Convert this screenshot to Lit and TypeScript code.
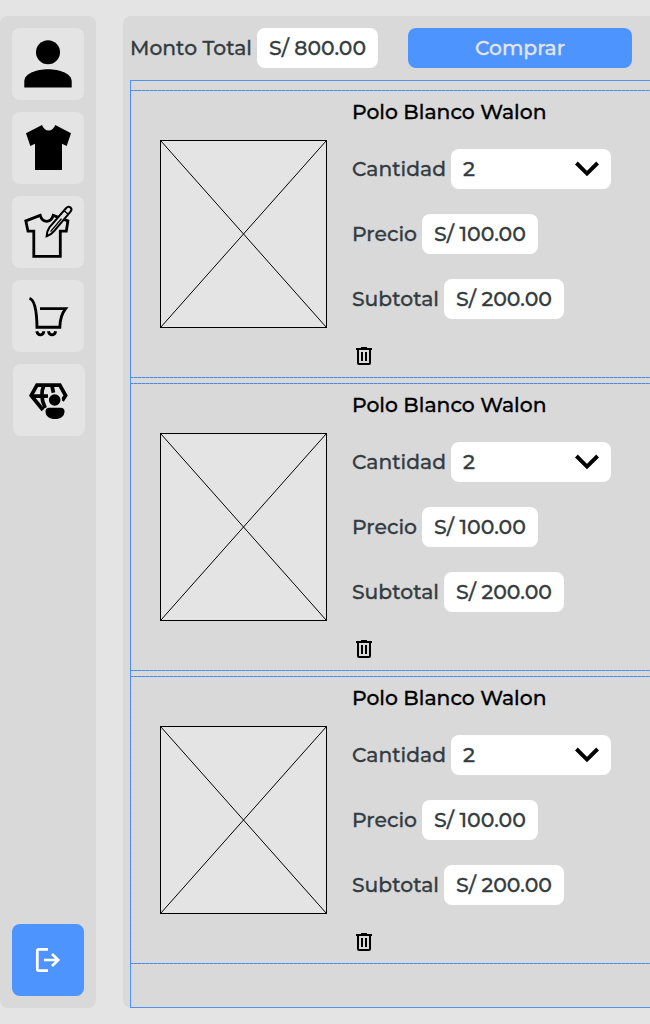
import { LitElement, html, css, svg } from "lit";
import { customElement, property } from "lit/decorators.js";

interface CartItem {
  name: string;
  quantity: number;
  price: string;
  subtotal: string;
}

const ITEMS: CartItem[] = Array.from({ length: 3 }, () => ({
  name: "Polo Blanco Walon",
  quantity: 2,
  price: "S/ 100.00",
  subtotal: "S/ 200.00",
}));

// A line of text set to a fixed advance width, on a 24px high line.
@customElement("fit-text")
export class FitText extends LitElement {
  @property() text = "";
  @property({ type: Number }) width = 0;

  static styles = css`
    :host { display: block; height: 24px; flex: none; }
    .line { display: block; overflow: visible; }
    .glyphs {
      font-family: Montserrat, Inter, "Open Sans", sans-serif;
      font-size: 20px;
      font-weight: inherit;
      fill: currentColor;
      stroke: currentColor;
      stroke-width: 0.28px;
    }
  `;

  render() {
    return html`<svg class="line" width=${this.width} height="24">
      <text class="glyphs" x="0" y="19" textLength=${this.width} lengthAdjust="spacingAndGlyphs">${this.text}</text>
    </svg>`;
  }
}

const icons = {
  user: svg`<circle cx="36" cy="24.2" r="12"/><path d="M12.3 59.5V53.5C12.3 45.5 24.5 41.3 36 41.3S59.7 45.5 59.7 53.5V59.5Z"/>`,
  shirt: svg`<path d="M30 13L14 21.3 18.3 34 23 31.7V58H50V31.7L54.7 34 59 21.3 43.3 13C42 16.5 39.5 18.6 36.6 18.6S31.2 16.5 30 13Z"/>`,
  design: svg`
    <path d="M28.2 19.4L13.8 24.9 16 35.2H21.8V60.3H48.3V35.2H54.3L55.9 25 41.2 19.4C40 23.5 37.6 25.3 34.7 25.3S29.4 23.5 28.2 19.4Z" fill="none" stroke="#000" stroke-width="2.8"/>
    <path d="M34.6 40.3C34.9 36.8 35.7 33.8 37.4 31.4L54.2 12C55.5 10.6 57.4 10.6 58.5 11.5 59.7 12.6 59.7 14.2 58.5 15.6L42.3 34.9C40.2 37.5 37.6 39.4 34.6 40.3Z" fill="#e4e4e4" stroke="#000" stroke-width="2"/>
    <path d="M52.2 14.8L56.2 18.2M38.6 35.6L49.5 22.6" fill="none" stroke="#000" stroke-width="1.4"/>`,
  cart: svg`<g fill="none" stroke="#000" stroke-width="2.9">
    <path d="M17.5 18.3C23.5 20 24.8 33 25 47.2H47.8C48 39.5 49.5 33.8 53.6 28.6H28"/>
    <path d="M24.8 51.3C25.8 56 31 56 32 51.3M36.4 51.3C37.4 56 42.7 56 43.7 51.3"/></g>`,
  diamond: svg`<g fill="none" stroke="#000" stroke-width="3.7">
      <path d="M30 46L18.2 31.5 24 21.2H46.8L52.6 31.5 49.2 36.6"/>
      <path d="M18 32.2H35M31 21C27.8 28 28.3 36 32.2 44M38.8 21L40.5 29"/></g>
    <circle cx="41.7" cy="36" r="7.4" fill="#e4e4e4"/>
    <rect x="31" y="42.4" width="22" height="14" rx="6" fill="#e4e4e4"/>
    <circle cx="41.7" cy="36" r="5.8"/>
    <path d="M36 43.8H48C50 43.8 51.5 45.3 51.5 47.3 51.5 52.5 47.5 55.1 42 55.1S32.5 52.5 32.5 47.3C32.5 45.3 34 43.8 36 43.8Z"/>`,
  logout: svg`<g fill="none" stroke="#fff" stroke-width="2.7">
    <path d="M36 25.3H26.7Q25.3 25.3 25.3 26.7V45.3Q25.3 46.7 26.7 46.7H36M32 36H46.5M40 30L46.2 36 40 42"/></g>`,
};

@customElement("nav-button")
export class NavButton extends LitElement {
  @property() icon: keyof typeof icons = "user";

  static styles = css`
    :host { display: block; width: 72px; height: 72px; border-radius: 8px; background: #e4e4e4; }
    .icon { display: block; }
  `;

  render() {
    return html`<svg class="icon" width="72" height="72" viewBox="0 0 72 72">${icons[this.icon]}</svg>`;
  }
}

@customElement("cart-item")
export class CartItemRow extends LitElement {
  @property({ attribute: false }) item!: CartItem;

  static styles = css`
    :host {
      display: flex;
      box-sizing: border-box;
      height: 288px;
      align-items: center;
      gap: 25px;
      padding-left: 30px;
      margin-left: -1px;
      color: #343c41;
      font-weight: 500;
      background:
        repeating-linear-gradient(90deg, #4a8be8 0 3px, #73a9f5 3px 4px) top / 100% 1px no-repeat,
        repeating-linear-gradient(90deg, #4a8be8 0 3px, #73a9f5 3px 4px) bottom / 100% 1px no-repeat,
        repeating-linear-gradient(180deg, #4a8bee 0 3px, #4d94ff 3px 4px) left / 1px 100% no-repeat;
    }
    .picture { display: block; flex: none; }
    .details { display: flex; flex-direction: column; gap: 25px; }
    .title { color: #000; }
    .row { display: flex; align-items: center; gap: 5px; }
    .box {
      display: flex;
      box-sizing: border-box;
      height: 40px;
      align-items: center;
      justify-content: space-between;
      padding: 0 12px;
      border-radius: 8px;
      background: #fff;
    }
    .select { width: 160px; }
    .trash { display: block; }
  `;

  render() {
    const { name, quantity, price, subtotal } = this.item;
    return html`
      <svg class="picture" width="167" height="188" viewBox="0 0 167 188">
        <rect x=".5" y=".5" width="166" height="187" fill="#e4e4e4" stroke="#000"/>
        <path d="M.5 .5L166.5 187.5M166.5 .5L.5 187.5" stroke="#000"/>
      </svg>
      <div class="details">
        <fit-text class="title" .text=${name} .width=${194.5}></fit-text>
        <div class="row">
          <fit-text text="Cantidad" .width=${94}></fit-text>
          <div class="box select">
            <fit-text .text=${String(quantity)} .width=${12}></fit-text>
            <svg width="24" height="24"><path d="M1.4 6L12 16.6 22.6 6" fill="none" stroke="#000" stroke-width="3.9"/></svg>
          </div>
        </div>
        <div class="row">
          <fit-text text="Precio" .width=${65}></fit-text>
          <div class="box"><fit-text .text=${price} .width=${92}></fit-text></div>
        </div>
        <div class="row">
          <fit-text text="Subtotal" .width=${87}></fit-text>
          <div class="box"><fit-text .text=${subtotal} .width=${96}></fit-text></div>
        </div>
        <svg class="trash" width="24" height="24" viewBox="0 0 24 24">
          <path fill-rule="evenodd" d="M7 21Q5 21 5 19V6H4V4H9V3H15V4H20V6H19V19Q19 21 17 21ZM7 6V19H17V6ZM9 8H11V17H9ZM13 8H15V17H13Z"/>
        </svg>
      </div>`;
  }
}

@customElement("app-root")
export class AppRoot extends LitElement {
  static styles = css`
    :host {
      display: flex;
      box-sizing: border-box;
      width: 100%;
      height: 1024px;
      padding: 16px 0;
      gap: 27px;
      overflow: hidden;
      background: #e4e4e4;
      color: #343c41;
      font-weight: 500;
    }
    .sidebar {
      display: flex;
      flex: none;
      box-sizing: border-box;
      width: 96px;
      flex-direction: column;
      gap: 12px;
      padding: 12px;
      border-radius: 8px;
      background: #d9d9d9;
    }
    .shifted { margin-left: 1px; }
    .logout { margin-top: auto; background: #4d94ff; }
    .panel {
      display: flex;
      flex: 1;
      flex-direction: column;
      gap: 12px;
      box-sizing: border-box;
      padding: 12px 0 0 7px;
      border-radius: 8px 0 0 8px;
      background: #d9d9d9;
    }
    .header { display: flex; height: 40px; align-items: center; }
    .total {
      display: flex;
      height: 40px;
      align-items: center;
      margin: 0 30px 0 5px;
      padding: 0 12px;
      border-radius: 8px;
      background: #fff;
    }
    .buy {
      display: flex;
      width: 224px;
      height: 40px;
      align-items: center;
      justify-content: center;
      border-radius: 8px;
      background: #4d94ff;
      color: #e4e4e4;
    }
    .list {
      display: flex;
      flex: 1;
      flex-direction: column;
      gap: 5px;
      padding-top: 9px;
      border: 1px solid #4d94ff;
      border-right: 0;
    }
  `;

  render() {
    return html`
      <nav class="sidebar">
        <nav-button icon="user"></nav-button>
        <nav-button icon="shirt"></nav-button>
        <nav-button icon="design"></nav-button>
        <nav-button icon="cart"></nav-button>
        <nav-button class="shifted" icon="diamond"></nav-button>
        <nav-button class="logout" icon="logout"></nav-button>
      </nav>
      <main class="panel">
        <div class="header">
          <fit-text text="Monto Total" .width=${122}></fit-text>
          <div class="total"><fit-text text="S/ 800.00" .width=${97}></fit-text></div>
          <div class="buy"><fit-text text="Comprar" .width=${90}></fit-text></div>
        </div>
        <div class="list">
          ${ITEMS.map((item) => html`<cart-item .item=${item}></cart-item>`)}
        </div>
      </main>`;
  }
}
